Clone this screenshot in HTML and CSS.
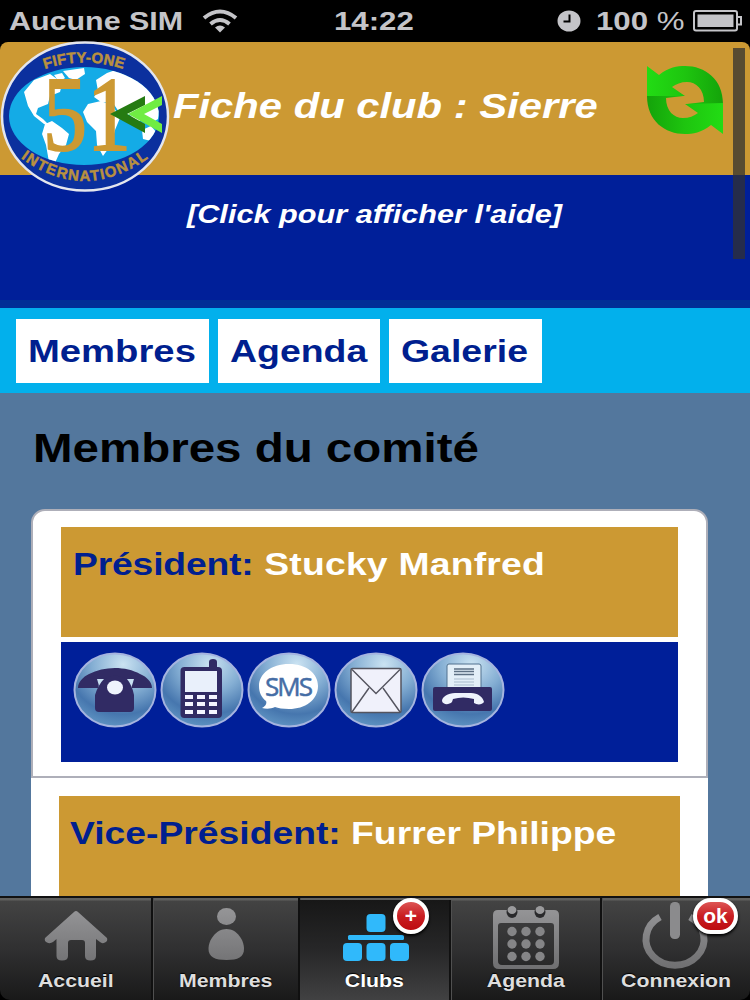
FILE: index.html
```
<!DOCTYPE html>
<html lang="fr">
<head>
    <meta charset="utf-8">
    <title>Fiche du club : Sierre</title>
    <link rel="stylesheet" href="styles.css">
</head>
<body>
    <div id="status-bar">
        <div class="carrier">
            <span class="wide">Aucune SIM</span>
            <svg width="36" height="24" viewBox="0 0 36 24">
                <g fill="none" stroke="#c4c4c8" stroke-width="4">
                    <path d="M2 9 Q18 -4 34 9"/>
                    <path d="M8.500 15 Q18 7 27.500 15"/>
                </g>
                <path d="M13 18.500 Q18 14.500 23 18.500 L18 23.500Z" fill="#c4c4c8"/>
            </svg>
        </div>
        <span class="wide time">14:22</span>
        <div class="battery">
            <svg width="24" height="22" viewBox="0 0 24 22">
                <ellipse cx="12" cy="11" rx="11.500" ry="10.500" fill="#c4c4c8"/>
                <path d="M12.500 4.500V11.500H6.500" fill="none" stroke="#000" stroke-width="2"/>
            </svg>
            <span class="wide percent">100 <span class="light">%</span></span>
            <svg width="50" height="22" viewBox="0 0 50 22">
                <rect x="1" y="1" width="43" height="19.500" rx="2" fill="none" stroke="#c4c4c8" stroke-width="2"/>
                <rect x="4.500" y="4.500" width="36" height="12.500" fill="#c4c4c8"/>
                <path d="M44 7H48V14.500H44" fill="none" stroke="#c4c4c8" stroke-width="2"/>
            </svg>
        </div>
    </div>

    <div id="header">
        <svg width="170" height="151" viewBox="0 0 170 151">
            <defs>
                <clipPath id="globe"><ellipse cx="84" cy="74" rx="75" ry="49"/></clipPath>
                <path id="arcTop" d="M42 28 Q84 13 126 28"/>
                <path id="arcBottom" d="M18 114 Q84 164 151 114"/>
            </defs>
            <ellipse cx="85" cy="74.500" rx="83" ry="74" fill="#0b309e" stroke="#e4e6ee" stroke-width="2.500"/>
            <ellipse cx="84" cy="74" rx="75" ry="49" fill="#14abe6"/>
            <g clip-path="url(#globe)" fill="#fff">
                <path d="M24 50L34 38L50 32L57 37L62 42L60 50L50 54L48 62L38 66L36 72L43 77L50 84L44 82L34 74L28 64Z"/>
                <path d="M45 82L52 79L62 86L69 92L66 103L59 112L55 121L49 120L46 103L42 92Z"/>
                <path d="M63 29L84 26L85 32L76 38L69 36Z"/>
                <path d="M54 33L62 31L65 36L59 40Z"/>
                <path d="M96 38L107 31L121 26L139 34L153 46L160 62L158 77L150 82L143 75L137 82L130 73L119 70L113 61L101 60L94 55L98 49Z"/>
                <path d="M88 62L101 59L113 64L120 76L115 88L111 103L103 114L97 103L96 89L87 80L83 70Z"/>
                <path d="M142 88L151 84L157 91L151 99L143 97Z"/>
            </g>
            <g class="logo-text">
                <text><textPath href="#arcTop" startOffset="50%" text-anchor="middle" textLength="80">FIFTY-ONE</textPath></text>
                <text><textPath href="#arcBottom" startOffset="50%" text-anchor="middle" textLength="138">INTERNATIONAL</textPath></text>
            </g>
            <text class="logo-number" x="43" y="108" textLength="88" lengthAdjust="spacingAndGlyphs">51</text>
            <path d="M110 72L145 54V63L127 72L145 82V91Z" fill="#257b12"/>
            <path d="M128 72L162 54V63L144 72L162 82V91Z" fill="#70ed43"/>
        </svg>
        <h1><span class="wide title">Fiche du club : Sierre</span></h1>
        <svg class="refresh" width="76" height="68" viewBox="0 0 76 68">
            <defs>
                <linearGradient id="green" x1="0" y1="0" x2="1" y2="0">
                    <stop offset="0" stop-color="#22dc14"/>
                    <stop offset=".5" stop-color="#1ec50f"/>
                    <stop offset="1" stop-color="#14a30a"/>
                </linearGradient>
            </defs>
            <path id="arrow" d="M0 0L12 9C22 1 30 0 38 0C58 0 76 13 76 38H40L57 36C57 23 49 16 40 16C34 16 29 18 25 21L38 30L0 31Z" fill="url(#green)"/>
            <use href="#arrow" transform="rotate(180 38 34)"/>
        </svg>
    </div>

    <div id="help"><span class="wide help-text">[Click pour afficher l'aide]</span></div>

    <div id="tabs">
        <a class="tab members"><span class="wide">Membres</span></a>
        <a class="tab agenda"><span class="wide">Agenda</span></a>
        <a class="tab gallery"><span class="wide">Galerie</span></a>
    </div>

    <div id="content">
        <h2><span class="wide">Membres du comité</span></h2>
        <div class="member first">
            <div class="name"><span class="wide"><b>Président:</b> Stucky Manfred</span></div>
            <div class="actions">
                <svg class="action" viewBox="0 0 84 76">
                    <defs>
                        <radialGradient id="ball" cx=".6" cy=".15" r=".85">
                            <stop offset="0" stop-color="#cbe3f2"/>
                            <stop offset=".45" stop-color="#84aed3"/>
                            <stop offset=".8" stop-color="#4676ae"/>
                            <stop offset="1" stop-color="#5c90c0"/>
                        </radialGradient>
                    </defs>
                    <ellipse class="ball" cx="42" cy="38" rx="40.500" ry="36.500"/>
                    <path d="M5 36C5 30 10 25 16 22C31 14 53 14 67 22C74 25 79 30 79 36H59C58 31 58 29 57 27L28 27C26 30 26 33 25 36Z" fill="#312b64"/>
                    <path d="M24 27H61L58 37H27Z" fill="#c8e0f2"/>
                    <path d="M31 27Q42 20 54 27Q59 33 61 43V56Q61 60 57 60H26Q22 60 22 56V43Q25 33 31 27Z" fill="#312b64"/>
                    <ellipse cx="42" cy="35.500" rx="8" ry="7" fill="#eef3fc"/>
                </svg>
                <svg class="action" viewBox="0 0 84 76">
                    <ellipse class="ball" cx="42" cy="38" rx="40.500" ry="36.500"/>
                    <path d="M49 17V10Q49 7 53 7Q57 7 57 10V17Z" fill="#312b64"/>
                    <rect x="20.500" y="15" width="41.500" height="51" rx="4" fill="#312b64"/>
                    <rect x="25" y="19" width="32" height="21" fill="#e9f0fb"/>
                    <g fill="#f4f4ff">
                        <rect x="25" y="43" width="8" height="4"/><rect x="37" y="43" width="8" height="4"/><rect x="49" y="43" width="8" height="4"/>
                        <rect x="25" y="50" width="8" height="4"/><rect x="37" y="50" width="8" height="4"/><rect x="49" y="50" width="8" height="4"/>
                        <rect x="25" y="58" width="8" height="4"/><rect x="37" y="58" width="8" height="4"/><rect x="49" y="58" width="8" height="4"/>
                    </g>
                </svg>
                <svg class="action" viewBox="0 0 84 76">
                    <ellipse class="ball" cx="42" cy="38" rx="40.500" ry="36.500"/>
                    <path d="M42 12C60 12 71 22 71 34C71 48 58 57 42 57C36 57 31 56 28 55C24 57 19 57 15 56C19 54 20 51 19 49C14 45 12 40 12 34C12 22 24 12 42 12Z" fill="#fff"/>
                    <text class="sms" x="18" y="44" textLength="48">SMS</text>
                </svg>
                <svg class="action" viewBox="0 0 84 76">
                    <ellipse class="ball" cx="42" cy="38" rx="40.500" ry="36.500"/>
                    <rect x="17" y="16.500" width="50" height="44" rx="1.500" fill="#f0f1fb" stroke="#54545f" stroke-width="1.500"/>
                    <path d="M18 17.500L42 41.500L66 17.500M18 60L35 36M66 60L49 36" fill="none" stroke="#54545f" stroke-width="1.400"/>
                </svg>
                <svg class="action" viewBox="0 0 84 76">
                    <ellipse class="ball" cx="42" cy="38" rx="40.500" ry="36.500"/>
                    <path d="M26 37V14Q26 12 28 12H58Q60 12 60 14V37Z" fill="#e3eff8" stroke="#50718e" stroke-width="1"/>
                    <path d="M33 17H53M33 19.500H53M33 22.500H53" stroke="#5d7084" stroke-width="1.300"/>
                    <path d="M33 27H53M33 30H53M33 33H53" stroke="#a9bccb" stroke-width="1.200"/>
                    <rect x="12" y="35" width="59" height="24" rx="2" fill="#312b64"/>
                    <path d="M21 49C21 45 27 41 34 41H50C57 41 62 45 63 50C61 53 56 53 53 51V47Q42 44 32 47L31 50C28 53 22 53 21 49Z" fill="#eef3fc"/>
                </svg>
            </div>
        </div>
        <div class="member">
            <div class="name"><span class="wide"><b>Vice-Président:</b> Furrer Philippe</span></div>
        </div>
    </div>

    <div id="scrollbar"></div>

    <div id="nav">
        <a class="nav-item">
            <svg width="64" height="60" viewBox="0 0 64 60">
                <defs>
                    <linearGradient id="grey" gradientUnits="userSpaceOnUse" x1="0" y1="0" x2="0" y2="60">
                        <stop offset="0" stop-color="#969698"/>
                        <stop offset="1" stop-color="#707072"/>
                    </linearGradient>
                </defs>
                <path d="M32 4Q33 4 34 5L63 31Q64 34 61 35.500Q58 37 56 35L52 32V49Q52 53.500 46.500 53.500Q41 53.500 41 49V36Q41 33 38 33H27Q24 33 24 36V49Q24 53.500 18 53.500Q12.500 53.500 12.500 49V32L9 35Q6 37 3 35.500Q0 34 1 31L30 5Q31 4 32 4Z" fill="url(#grey)"/>
            </svg>
            <span class="wide">Accueil</span>
        </a>
        <a class="nav-item">
            <svg width="64" height="60" viewBox="0 0 64 60">
                <ellipse cx="32.500" cy="9.500" rx="9.500" ry="8.500" fill="url(#grey)"/>
                <path d="M32.500 22C43 22 50 33 50 42C50 50 44 53 32.500 53C21 53 14.500 50 14.500 42C14.500 33 22 22 32.500 22Z" fill="url(#grey)"/>
            </svg>
            <span class="wide">Membres</span>
        </a>
        <a class="nav-item active">
            <svg width="66" height="60" viewBox="-1 0 66 60">
                <g fill="#30b9fb">
                    <rect x="23.500" y="7" width="19" height="18" rx="4"/>
                    <rect x="5" y="28" width="56" height="5" rx="1.500"/>
                    <rect x="0" y="36" width="19" height="18" rx="4"/>
                    <rect x="23.500" y="36" width="19" height="18" rx="4"/>
                    <rect x="47" y="36" width="19" height="18" rx="4"/>
                </g>
            </svg>
            <span class="wide">Clubs</span>
            <span class="badge plus">+</span>
        </a>
        <a class="nav-item">
            <svg width="66" height="60" viewBox="0 0 66 60">
                <path fill-rule="evenodd" d="M5 3H61Q66 3 66 8V56Q66 62 60 62H6Q0 62 0 56V8Q0 3 5 3ZM8 16Q5 16 5 19V54Q5 58 9 58H57Q61 58 61 54V19Q61 16 58 16Z" fill="url(#grey)"/>
                <g fill="#29292b">
                    <ellipse cx="19" cy="5" rx="5.500" ry="6"/>
                    <ellipse cx="47" cy="5" rx="5.500" ry="6"/>
                </g>
                <g fill="#9a9a9c">
                    <ellipse cx="19" cy="3" rx="4.500" ry="4"/>
                    <ellipse cx="47" cy="3" rx="4.500" ry="4"/>
                </g>
                <g fill="#858587">
                    <circle cx="19" cy="24.500" r="4.700"/><circle cx="33" cy="24.500" r="4.700"/><circle cx="47" cy="24.500" r="4.700"/>
                    <circle cx="19" cy="37" r="4.700"/><circle cx="33" cy="37" r="4.700"/><circle cx="47" cy="37" r="4.700"/>
                    <circle cx="19" cy="49.500" r="4.700"/><circle cx="33" cy="49.500" r="4.700"/><circle cx="47" cy="49.500" r="4.700"/>
                </g>
            </svg>
            <span class="wide">Agenda</span>
        </a>
        <a class="nav-item">
            <svg width="66" height="60" viewBox="0 0 66 60">
                <path d="M17 10A29 26 0 1 0 47 10" fill="none" stroke="url(#grey)" stroke-width="7"/>
                <rect x="27" y="-5" width="10" height="37" rx="4.500" fill="#8b8b8d"/>
            </svg>
            <span class="wide">Connexion</span>
            <span class="badge ok">ok</span>
        </a>
    </div>
</body>
</html>
```
FILE: styles.css
```
* {
    box-sizing: border-box;
}

body {
    margin: 0;
    height: 1000px;
    display: flex;
    flex-direction: column;
    overflow: hidden;
    background-color: #000;
    font-family: "Liberation Sans", Arial, sans-serif;
    font-weight: bold;
}

svg {
    display: block;
    flex: none;
    overflow: visible;
}

/* horizontally expanded lettering */
.wide {
    display: inline-block;
    white-space: nowrap;
    transform: scaleX(1.17);
    transform-origin: left center;
}

#status-bar {
    height: 42px;
    flex: none;
    display: grid;
    grid-template-columns: 334px 223px 1fr;
    align-items: center;
    font-size: 26px;
    color: #c4c4c8;
}

.carrier {
    display: flex;
    align-items: center;
    padding-left: 9px;
}

.carrier .wide {
    width: 193px;
}

.time {
    transform: scaleX(1.2);
}

.battery {
    display: flex;
    align-items: center;
}

.percent {
    width: 97px;
    margin-left: 15px;
    transform: scaleX(1.2);
}

.light {
    font-weight: normal;
}

#header {
    height: 133px;
    flex: none;
    display: flex;
    position: relative;
    z-index: 1;
    background-color: #cc9933;
    border-radius: 8px 8px 0 0;
}

.logo-text {
    font-size: 15px;
    fill: #b9913f;
    stroke: #b9913f;
    stroke-width: .5px;
}

.logo-number {
    font-family: "Liberation Serif", serif;
    font-size: 105px;
    font-weight: normal;
    fill: #cc9933;
    stroke: #cc9933;
    stroke-width: 2px;
}

h1 {
    width: 477px;
    margin: 0;
    padding: 44px 0 0 3px;
    font-size: 35px;
    line-height: 40px;
    font-style: italic;
    color: #fff;
}

.title {
    transform: scaleX(1.193);
}

.refresh {
    margin-top: 24px;
}

#help {
    height: 133px;
    flex: none;
    padding: 24px 0 0 187px;
    border-bottom: 8px solid #002f96;
    background-color: #001f99;
    font-size: 26px;
    line-height: 30px;
    font-style: italic;
    color: #fff;
}

.help-text {
    transform: scaleX(1.18);
}

#tabs {
    height: 85px;
    flex: none;
    display: flex;
    gap: 9px;
    padding: 11px 16px 10px;
    background-color: #02b0ec;
}

.tab {
    padding-left: 12px;
    background-color: #fff;
    font-size: 32px;
    line-height: 65px;
    color: #001f8f;
}

.members {
    width: 193px;
}

.members .wide {
    transform: scaleX(1.195);
}

.agenda {
    width: 162px;
}

.gallery {
    width: 153px;
}

#content {
    height: 503px;
    flex: none;
    padding: 31px 42px 0 31px;
    overflow: hidden;
    background-color: #53779d;
}

h2 {
    margin: 0 0 37px 2px;
    font-size: 41px;
    line-height: 48px;
    color: #000;
}

h2 .wide {
    transform: scaleX(1.158);
}

.member {
    height: 130px;
    padding: 18px 28px 0;
    background-color: #fff;
}

.member .wide {
    margin-left: -1px;
    transform: scaleX(1.165);
}

.first {
    height: 269px;
    border: 2px solid #aeafb9;
    border-radius: 14px 14px 0 0;
    padding: 16px 28px 0;
}

.first .wide {
    margin-left: 0;
    letter-spacing: .2px;
}

.first b {
    letter-spacing: -.15px;
}

.name {
    height: 110px;
    padding: 19px 0 0 12px;
    background-color: #cc9933;
    font-size: 32px;
    line-height: 37px;
    color: #fff;
}

.name b {
    color: #001f8f;
}

.actions {
    display: flex;
    gap: 3px;
    height: 120px;
    margin-top: 5px;
    padding: 10px 0 0 12px;
    background-color: #001f99;
}

.action {
    width: 84px;
    height: 76px;
}

.ball {
    fill: url(#ball);
    stroke: #a5b4df;
    stroke-width: 2px;
}

.sms {
    font-family: "Open Sans", sans-serif;
    font-size: 26px;
    font-weight: normal;
    fill: #456da5;
    stroke: #456da5;
    stroke-width: .5px;
}

#scrollbar {
    position: absolute;
    top: 48px;
    left: 733px;
    z-index: 2;
    width: 12px;
    height: 211px;
    background-color: rgba(50, 50, 50, .75);
}

#nav {
    height: 104px;
    flex: none;
    display: grid;
    grid-template-columns: 153px 147px 151px 151px 148px;
    border-top: 2px solid #111;
    border-radius: 0 0 10px 10px;
    background: linear-gradient(#60605e 0 2px, #434343 3px, #303031 50%, #191919);
    font-size: 19px;
    color: #dedede;
    text-shadow: 0 -1px 1px #000;
}

.nav-item {
    display: flex;
    flex-direction: column;
    align-items: center;
    justify-content: space-between;
    position: relative;
    padding: 9px 0 8px;
    border-right: 2px solid #101010;
    box-shadow: 1px 0 #505050;
}

.nav-item:last-child {
    border-right: 0;
}

.nav-item .wide {
    line-height: 22px;
    transform: scaleX(1.12);
    transform-origin: center;
}

.active {
    margin-top: 2px;
    padding-top: 7px;
    background: linear-gradient(#171717, #272728 50%, #414142);
    color: #fff;
}

.badge {
    position: absolute;
    top: 0;
    height: 36px;
    border: 4px solid #fff;
    border-radius: 18px;
    background: linear-gradient(#dd5555, #c91e22 50%, #bd0c10);
    box-shadow: 0 2px 3px #000;
    font-size: 21px;
    line-height: 27px;
    text-align: center;
    text-shadow: none;
    color: #fff;
}

.plus {
    top: -2px;
    left: 93px;
    width: 36px;
}

.ok {
    left: 91px;
    width: 45px;
}
```
